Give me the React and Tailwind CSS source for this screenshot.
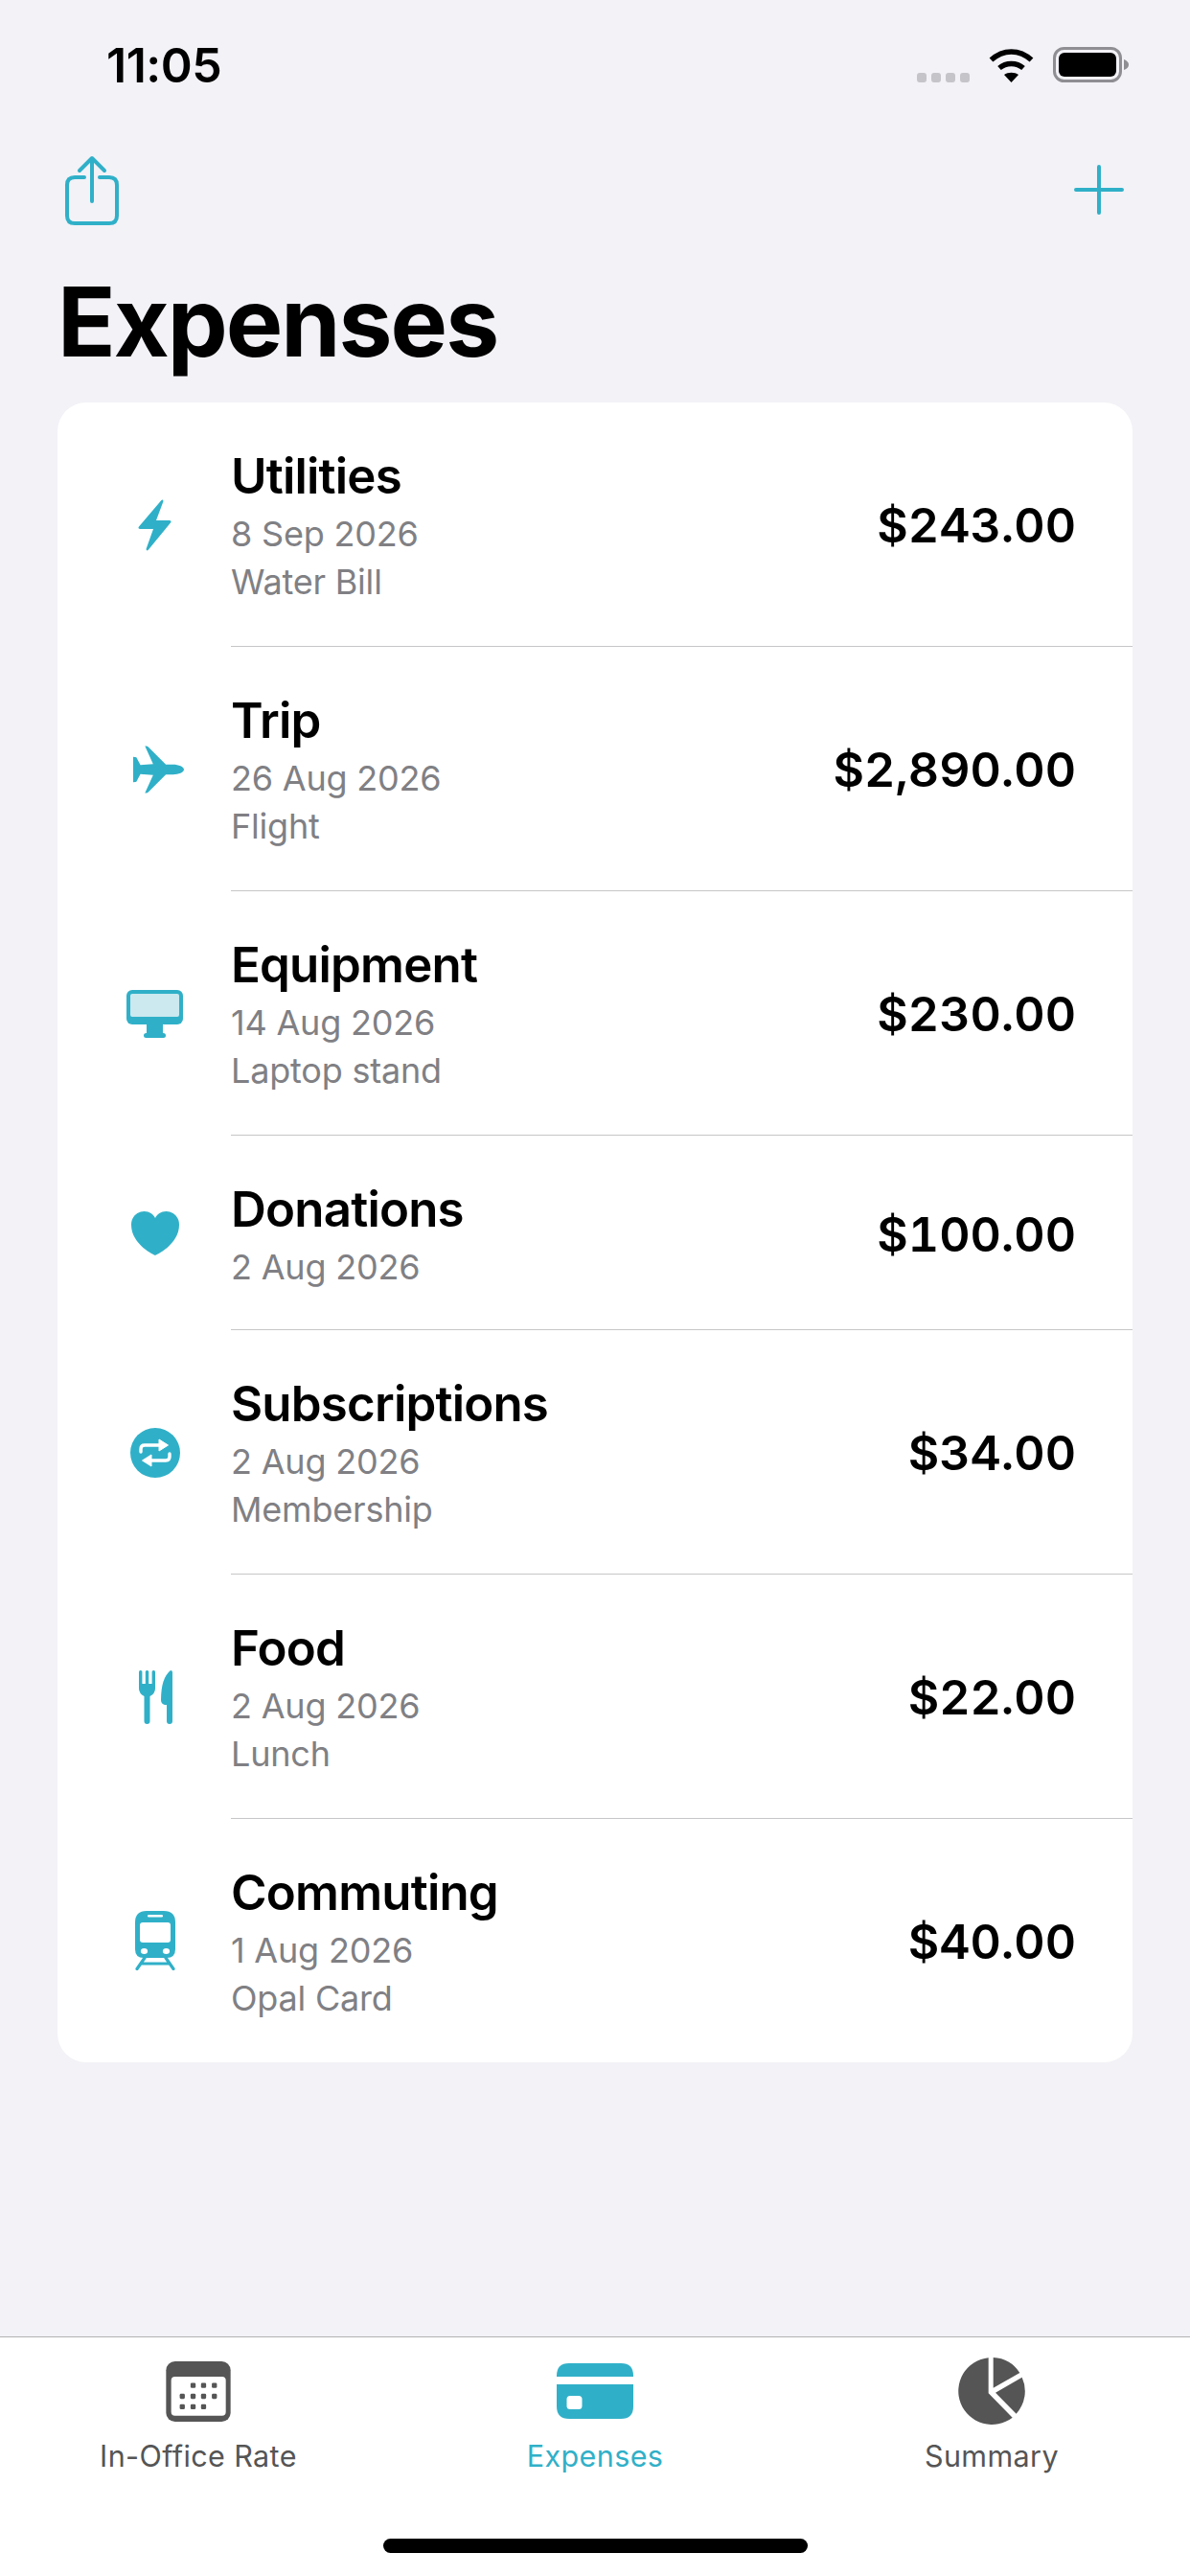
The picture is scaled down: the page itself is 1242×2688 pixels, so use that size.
import React from "react";

const TEAL = "#30b0c8";

const BoltIcon = () => (
  <svg width="35" height="54" viewBox="0 0 35 54" fill={TEAL}>
    <path d="M24 1.5 Q26 -0.5 26.5 2 L19 22 H33 Q35.5 22.5 34 24.5 L11 52.5 Q9 54.5 8.5 52 L16 31 H2 Q-0.5 30.5 1 28.5 Z" />
  </svg>
);

const PlaneIcon = () => (
  <svg className="ml-[7px]" width="56" height="52" viewBox="0 0 56 52" fill={TEAL}>
    <path d="M56 26 C56 23 50 20.5 44 20.5 H36 L17 1.5 Q16 0 14 0 H13 L22 20 L8 21 L3.5 12.5 Q3 12 0 12 V40 Q3 40 3.5 39.5 L8 31 L22 32 L13 52 H14 Q16 52 17 50.5 L36 31.5 H44 C50 31.5 56 29 56 26 Z" />
  </svg>
);

const MonitorIcon = () => (
  <svg width="59" height="50" viewBox="0 0 59 50">
    <rect x="0" y="0" width="59" height="36" rx="6" fill={TEAL} />
    <rect x="4" y="4" width="51" height="24" rx="2" fill="#cbe9ef" />
    <rect x="21" y="35" width="17" height="12" fill={TEAL} />
    <rect x="18" y="45" width="23" height="5" rx="2.5" fill={TEAL} />
  </svg>
);

const HeartIcon = () => (
  <svg width="50" height="46" viewBox="0 0 50 46" fill={TEAL}>
    <path d="M25 46 C25 46 0 35 0 14 C0 5 7 0 13.5 0 C19 0 23 3 25 7 C27 3 31 0 36.5 0 C43 0 50 5 50 14 C50 35 25 46 25 46 Z" />
  </svg>
);

const RepeatIcon = () => (
  <svg width="52" height="52" viewBox="0 0 52 52">
    <circle cx="26" cy="26" r="26" fill={TEAL} />
    <path d="M11 25 V22 Q11 18 15 18 H31 M41 27 V30 Q41 34 37 34 H21" fill="none" stroke="#fff" strokeWidth="3.4" strokeLinecap="round" />
    <path d="M30 12 L39.5 18 L30 24 Z M22 28 L12.5 34 L22 40 Z" fill="#fff" stroke="#fff" strokeWidth="1" strokeLinejoin="round" />
  </svg>
);

const FoodIcon = () => (
  <svg className="ml-[2px]" width="35" height="56" viewBox="0 0 35 56" fill={TEAL}>
    <rect x="0" y="0" width="3.4" height="18" rx="1.5" />
    <rect x="6.8" y="0" width="3.4" height="18" rx="1.5" />
    <rect x="13.6" y="0" width="3.4" height="18" rx="1.5" />
    <path d="M0 14 H17 V19 Q17 24 11.5 27 V53 Q11.5 56 8.5 56 Q5.5 56 5.5 53 V27 Q0 24 0 19 Z" />
    <path d="M35 2 V53 Q35 56 32 56 Q29 56 29 53 V36 H27 Q23 35 23 31 Q23 8 33 0 Q35 0 35 2 Z" />
  </svg>
);

const TrainIcon = () => (
  <svg width="42" height="62" viewBox="0 0 42 62">
    <path d="M12 0 H30 Q42 0 42 12 V40 Q42 49 33 49 H9 Q0 49 0 40 V12 Q0 0 12 0 Z" fill={TEAL} />
    <rect x="13" y="4" width="16" height="2.6" rx="1.3" fill="#fff" />
    <rect x="5" y="12" width="32" height="21" rx="3" fill="#fff" />
    <ellipse cx="9.5" cy="42" rx="3.6" ry="3" fill="#fff" />
    <ellipse cx="32.5" cy="42" rx="3.6" ry="3" fill="#fff" />
    <path d="M10 49 L2 60.5 M32 49 L40 60.5 M8 55 H34" fill="none" stroke={TEAL} strokeWidth="3.2" strokeLinecap="round" />
  </svg>
);

const expenses = [
  { title: "Utilities", date: "8 Sep 2026", note: "Water Bill", amount: "$243.00", icon: <BoltIcon /> },
  { title: "Trip", date: "26 Aug 2026", note: "Flight", amount: "$2,890.00", icon: <PlaneIcon /> },
  { title: "Equipment", date: "14 Aug 2026", note: "Laptop stand", amount: "$230.00", icon: <MonitorIcon /> },
  { title: "Donations", date: "2 Aug 2026", amount: "$100.00", icon: <HeartIcon /> },
  { title: "Subscriptions", date: "2 Aug 2026", note: "Membership", amount: "$34.00", icon: <RepeatIcon /> },
  { title: "Food", date: "2 Aug 2026", note: "Lunch", amount: "$22.00", icon: <FoodIcon /> },
  { title: "Commuting", date: "1 Aug 2026", note: "Opal Card", amount: "$40.00", icon: <TrainIcon /> },
];

const ExpenseRow = ({ item, last }) => (
  <div className="flex items-stretch">
    <div className="flex w-[181px] shrink-0 items-center justify-center pl-[22px]">
      <div className="flex w-[60px] justify-center">{item.icon}</div>
    </div>
    <div className={`flex flex-1 items-center justify-between pr-[59px] pt-[47px] ${item.note ? "pb-[42px]" : "pb-[40px]"} ${last ? "" : "border-b border-[#c6c6c8]"}`}>
      <div>
        <div className="text-[51px] font-semibold leading-[60px] tracking-[-0.8px] text-black">{item.title}</div>
        <div className="mt-[5px] text-[36px] leading-[50px] tracking-[-0.2px] text-[#808084]">{item.date}</div>
        {item.note && <div className="text-[36px] leading-[50px] tracking-[-0.2px] text-[#808084]">{item.note}</div>}
      </div>
      <div className="mb-[3px] text-[50px] font-semibold leading-[60px] tabular-nums text-black">{item.amount}</div>
    </div>
  </div>
);

const CalendarTab = () => (
  <svg width="68" height="63" viewBox="127 72 203 190">
    <rect x="127" y="72" width="203" height="190" rx="28" fill="#555" />
    <rect x="143" y="120" width="172" height="123" rx="12" fill="#fff" />
    {[[212, 148], [245, 148], [279, 148], [178, 182], [212, 182], [245, 182], [279, 182], [178, 215], [212, 215], [245, 215]].map(([x, y]) => (
      <rect key={`${x}-${y}`} x={x - 8} y={y - 8} width="16" height="16" rx="4" fill="#555" />
    ))}
  </svg>
);

const CardTab = () => (
  <svg width="80" height="58" viewBox="0 0 80 58">
    <path d="M13 0 H67 Q80 0 80 13 V14 H0 V13 Q0 0 13 0 Z" fill={TEAL} />
    <path d="M0 22 H80 V45 Q80 58 67 58 H13 Q0 58 0 45 Z" fill={TEAL} />
    <rect x="10.5" y="34" width="16" height="14" rx="3.5" fill="#fff" />
  </svg>
);

const PieTab = () => (
  <svg width="70" height="70" viewBox="90 60 210 210" fill="#555">
    <path d="M185 60.5 V172 L260 248 A105 105 0 1 1 185 60.5 Z" />
    <path d="M200 60 V155 L283 108 A105 105 0 0 0 200 60 Z" />
    <path d="M207 170 L290 122 A105 105 0 0 1 272 236 Z" />
  </svg>
);

const tabs = [
  { label: "In-Office Rate", icon: <CalendarTab />, active: false },
  { label: "Expenses", icon: <CardTab />, active: true },
  { label: "Summary", icon: <PieTab />, active: false },
];

export default function App() {
  return (
    <div className="flex h-[2688px] w-[1242px] flex-col overflow-hidden bg-[#f2f2f7] font-['Inter',sans-serif]">
      {/* status bar */}
      <div className="flex h-[162px] items-start justify-between pl-[111px] pr-[64px] pt-[44px]">
        <div className="text-[50px] font-semibold leading-[48px] tracking-[-0.5px] text-black">11:05</div>
        <div className="mt-[5px] flex h-[37px] items-end gap-[20px]">
          <div className="flex gap-[5px]">
            <span className="h-[10px] w-[10px] rounded-[3px] bg-[#c5c5c9]" />
            <span className="h-[10px] w-[10px] rounded-[3px] bg-[#c5c5c9]" />
            <span className="h-[10px] w-[10px] rounded-[3px] bg-[#c5c5c9]" />
            <span className="h-[10px] w-[10px] rounded-[3px] bg-[#c5c5c9]" />
          </div>
          <svg width="47" height="36" viewBox="0 0 47 36" fill="none" stroke="#000" strokeWidth="5.5">
            <path d="M2.5 12.5 C15 1 32 1 44.5 12.5" />
            <path d="M11 21 C18 15 29 15 36 21" />
            <path d="M23.5 36 L16 28 C20 25 27 25 31 28 Z" fill="#000" stroke="none" />
          </svg>
          <svg width="79" height="37" viewBox="0 0 79 37">
            <rect x="1.5" y="1.5" width="69" height="34" rx="10" fill="none" stroke="#8e8e93" strokeWidth="3" />
            <rect x="6" y="6" width="60" height="25" rx="6" fill="#000" />
            <path d="M74 13 Q79 15 79 18.5 Q79 22 74 24 Z" fill="#8e8e93" />
          </svg>
        </div>
      </div>

      {/* nav buttons */}
      <div className="flex h-[75px] items-center justify-between pl-[66px] pr-[69px]">
        <svg width="60" height="75" viewBox="0 0 60 75" fill="none" stroke={TEAL} strokeWidth="4" strokeLinecap="round" strokeLinejoin="round">
          <path d="M22 23 H12 Q4 23 4 31 V63 Q4 71 12 71 H48 Q56 71 56 63 V31 Q56 23 48 23 H38" />
          <path d="M30 48 V4 M17 16 L30 3 L43 16" />
        </svg>
        <svg className="mb-[3px]" width="52" height="52" viewBox="0 0 52 52" fill="none" stroke={TEAL} strokeWidth="4" strokeLinecap="round">
          <path d="M26 2 V50 M2 26 H50" />
        </svg>
      </div>

      <h1 className="mt-[39px] pl-[60px] text-[100px] font-bold leading-[120px] tracking-[-2px] text-black">Expenses</h1>

      {/* expense list */}
      <div className="mx-[60px] mt-[24px] overflow-hidden rounded-[30px] bg-white">
        {expenses.map((item, i) => (
          <ExpenseRow key={item.title} item={item} last={i === expenses.length - 1} />
        ))}
      </div>

      {/* tab bar */}
      <div className="mt-auto flex h-[250px] flex-col border-t border-[#b2b2b2] bg-white">
        <div className="grid grid-cols-3 pt-[20px]">
          {tabs.map((tab) => (
            <div key={tab.label} className="flex flex-col items-center">
              <div className="flex h-[72px] items-center justify-center">{tab.icon}</div>
              <div className={`mt-[12px] text-[30.5px] font-normal leading-[40px] tracking-[0.4px] ${tab.active ? "text-[#30b0c8]" : "text-[#555555]"}`}>{tab.label}</div>
            </div>
          ))}
        </div>
        <div className="mt-auto mb-[24px] self-center h-[15px] w-[443px] rounded-full bg-black" />
      </div>
    </div>
  );
}
